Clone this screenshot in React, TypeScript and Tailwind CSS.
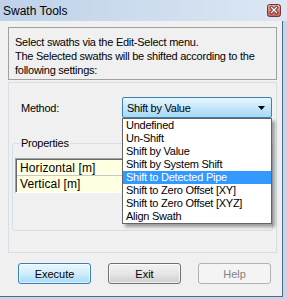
import React from "react";

const items = [
  "Undefined",
  "Un-Shift",
  "Shift by Value",
  "Shift by System Shift",
  "Shift to Detected Pipe",
  "Shift to Zero Offset [XY]",
  "Shift to Zero Offset [XYZ]",
  "Align Swath",
];

export default function App() {
  return (
    <div className="w-[287px] h-[299px] flex flex-col bg-[#c3d7ec] font-['Liberation_Sans',Arial,sans-serif] text-black overflow-hidden">
      {/* Title bar */}
      <div className="h-[21px] flex items-center pl-[3px] pr-[6px] bg-gradient-to-r from-[#bed2ea] via-[#cddcee] to-[#dbe7f4]">
        <span className="text-[12px] leading-[14px] flex-1">Swath Tools</span>
        <svg width="14" height="13" viewBox="0 0 14 13" className="mt-[-1px]">
          <defs>
            <linearGradient id="cb" x1="0" y1="0" x2="0" y2="1">
              <stop offset="0" stopColor="#e9b1a8" />
              <stop offset="0.5" stopColor="#d4817a" />
              <stop offset="1" stopColor="#c45d55" />
            </linearGradient>
          </defs>
          <rect x="0.5" y="0.5" width="13" height="12" rx="2" fill="url(#cb)" stroke="#7a3330" />
          <path d="M4.5 3.5 L9.5 8.5 M9.5 3.5 L4.5 8.5" stroke="#5a2522" strokeWidth="3" strokeLinecap="square" />
          <path d="M4.5 3.5 L9.5 8.5 M9.5 3.5 L4.5 8.5" stroke="#ffffff" strokeWidth="1.4" strokeLinecap="square" />
        </svg>
      </div>

      <div className="flex-1 flex">
        {/* Client area */}
        <div className="w-[283px] h-[276px] bg-[#f0f0f0] border-r border-b border-[#4d6a88] flex flex-col text-[11px] leading-[14px] tracking-[-0.25px]">
          {/* Info box */}
          <div className="ml-[8px] mt-[6px] w-[269px] h-[53px] border border-[#a0a0a0] pl-[6px] pt-[7px]">
            <div>Select swaths via the Edit-Select menu.</div>
            <div>The Selected swaths will be shifted according to the</div>
            <div>following settings:</div>
          </div>

          {/* Settings box */}
          <div className="ml-[8px] mt-[2px] w-[269px] h-[171px] border border-[#d5dfe5] flex flex-col">
            <div className="flex items-center mt-[14px] h-[21px]">
              <span className="pl-[12px] w-[113px]">Method:</span>
              <div className="relative">
                <div className="w-[150px] h-[21px] rounded-[2px] border border-[#3c7fb1] bg-gradient-to-b from-[#eaf6fd] via-[#c4e7fb] to-[#a7d9f5] flex items-center pl-[4px] pr-[6px]">
                  <span className="flex-1">Shift by Value</span>
                  <svg width="7" height="4" viewBox="0 0 7 4">
                    <path d="M0 0 H7 L3.5 4 Z" fill="#000" />
                  </svg>
                </div>
                {/* Dropdown list */}
                <div className="absolute left-0 top-[21px] w-[150px] bg-white border border-[#646464] shadow-[3px_3px_3px_rgba(0,0,0,0.35)] z-10">
                  {items.map((it) => (
                    <div
                      key={it}
                      className={
                        it === "Shift to Detected Pipe"
                          ? "h-[13px] leading-[13px] pl-[3px] bg-[#3399ff] text-white"
                          : "h-[13px] leading-[13px] pl-[3px]"
                      }
                    >
                      {it}
                    </div>
                  ))}
                </div>
              </div>
            </div>

            {/* Properties group */}
            <fieldset className="ml-[3px] mt-[19px] w-[261px] h-[94px] border border-[#d5dfe5] rounded-[3px] px-[2px]">
              <legend className="ml-[5px] px-[1px] leading-[13px]">Properties</legend>
              <div className="mt-[8px] border-t border-l border-[#a0a0a0] border-r border-b border-r-white border-b-white">
                <div className="border-t border-l border-[#696969] bg-[#ffffe1] text-[12px] tracking-[0.1px]">
                  <div className="h-[16px] leading-[16px] pl-[3px] border-b border-[#c8c8c8]">Horizontal [m]</div>
                  <div className="h-[16px] leading-[16px] pl-[3px]">Vertical [m]</div>
                </div>
              </div>
            </fieldset>
          </div>

          {/* Buttons */}
          <div className="flex gap-[17px] ml-[18px] mt-[10px] tracking-normal">
            <button className="w-[73px] h-[21px] rounded-[3px] border border-[#3c7fb1] bg-gradient-to-b from-[#eaf6fd] via-[#d0edfc] to-[#a7d9f5] shadow-[inset_0_0_0_1px_rgba(255,255,255,0.6)]">
              Execute
            </button>
            <button className="w-[73px] h-[21px] rounded-[3px] border border-[#707070] bg-gradient-to-b from-[#f2f2f2] via-[#e6e6e6] to-[#cfcfcf] shadow-[inset_0_0_0_1px_rgba(255,255,255,0.7)]">
              Exit
            </button>
            <button className="w-[73px] h-[21px] rounded-[3px] border border-[#adb2b5] bg-[#f4f4f4] text-[#838383]">
              Help
            </button>
          </div>
        </div>
      </div>
    </div>
  );
}
